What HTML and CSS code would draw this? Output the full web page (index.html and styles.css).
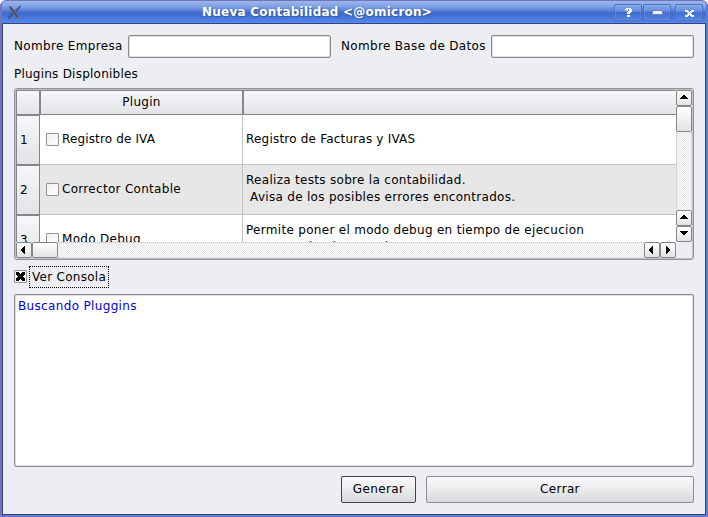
FILE: index.html
```html
<!DOCTYPE html>
<html lang="es">
<head>
<meta charset="utf-8">
<title>Nueva Contabilidad</title>
<link rel="stylesheet" href="styles.css">
</head>
<body>
<div class="window">
  <header class="titlebar">
    <svg class="logo" width="16" height="16" viewBox="0 0 16 16"><path d="M1.500 1.500h2.500L12.500 13H10z" fill="#3e424b" stroke="#77797e" stroke-width=".8"/><path d="M13.500 1 8.500 6.500M5.500 9 1.500 13.500" stroke="#454954" stroke-width="1.500"/></svg>
    <h1 class="title">Nueva Contabilidad &lt;@omicron&gt;</h1>
    <div class="controls">
      <span class="ctl"><svg width="26" height="16" viewBox="0 0 26 16"><path d="M10 5.500V4h1V3h5v1h1v3h-1v1h-1v1h-3V7h1V6h1V4h-1v1.500zM12 10h3v2h-3z" fill="#f4f6fc"/></svg></span>
      <span class="ctl"><svg width="26" height="16" viewBox="0 0 26 16"><path d="M8.500 5.500h10v4h-10z" fill="#eef0f4" stroke="#7280ae"/></svg></span>
      <span class="ctl last"><svg width="26" height="16" viewBox="0 0 26 16"><path d="M9 5h3v1h1v1h1V6h1V5h3v2h-2v1h-1v1h1v1h2v2h-3v-1h-1v-1h-1v1h-1v1H9v-2h2V9h1V8h-1V7H9z" fill="#f4f6fc"/></svg></span>
    </div>
  </header>
  <main class="content">
    <div class="form">
      <label class="name">Nombre Empresa</label><div class="field"></div>
      <label class="base">Nombre Base de Datos</label><div class="field"></div>
    </div>
    <div class="heading">Plugins Displonibles</div>
    <div class="table">
      <div class="view">
        <div class="row head"><div class="num"></div><div class="plugin"><span>Plugin</span></div><div class="desc"></div></div>
        <div class="row"><div class="num">1</div><div class="plugin"><i class="box"></i><span class="tight">Registro de IVA</span></div><div class="desc single"><p>Registro de Facturas y IVAS</p></div></div>
        <div class="row alt"><div class="num">2</div><div class="plugin"><i class="box"></i><span>Corrector Contable</span></div><div class="desc"><p>Realiza tests sobre la contabilidad.<br>&nbsp;Avisa de los posibles errores encontrados.</p></div></div>
        <div class="row"><div class="num">3</div><div class="plugin"><i class="box"></i><span>Modo Debug</span></div><div class="desc"><p>Permite poner el modo debug en tiempo de ejecucion<br>&nbsp;Se recomienda para depurar</p></div></div>
      </div>
      <div class="vbar">
        <span class="btn"><svg width="14" height="14"><path d="M6 4h2v1h1v1h1v1h1v1H3V7h1V6h1V5h1z"/></svg></span>
        <span class="vthumb"></span><span class="vtrack"></span>
        <span class="btn"><svg width="14" height="14"><path d="M6 4h2v1h1v1h1v1h1v1H3V7h1V6h1V5h1z"/></svg></span>
        <span class="btn"><svg width="14" height="14"><path d="M3 4h8v1h-1v1H9v1H8v1H6V7H5V6H4V5H3z"/></svg></span>
      </div>
      <div class="hbar">
        <span class="btn"><svg width="14" height="14"><path d="M8 3v8H7v-1H6V9H5V8H4V6h1V5h1V4h1V3z"/></svg></span>
        <span class="hthumb"></span><span class="htrack"></span>
        <span class="btn"><svg width="14" height="14"><path d="M8 3v8H7v-1H6V9H5V8H4V6h1V5h1V4h1V3z"/></svg></span>
        <span class="btn"><svg width="14" height="14"><path d="M5 3v8h1v-1h1V9h1V8h1V6H8V5H7V4H6V3z"/></svg></span>
      </div>
    </div>
    <div class="toggle">
      <i class="box checked"><svg width="11" height="11" viewBox="0 0 11 11"><path d="M1 1h3v1h1v1h1V2h1V1h3v3H9v1H8v1h1v1h1v3H7V9H6V8H5v1H4v1H1V7h1V6h1V5H2V4H1z"/></svg></i>
      <span class="focus">Ver Consola</span>
    </div>
    <div class="console">Buscando Pluggins</div>
    <div class="actions"><div class="action primary">Generar</div><div class="action wide">Cerrar</div></div>
  </main>
</div>
</body>
</html>
```
FILE: styles.css
```css
* { box-sizing: border-box; }
body {
  margin: 0;
  background: #fff;
  color: #000;
  font: 12px/16px "DejaVu Sans", sans-serif;
}
.window {
  width: 708px;
  height: 517px;
  padding: 0 1px 1px;
  border: 1px solid #7573b5;
  border-radius: 6px 6px 0 0;
  background: #5283e2;
  overflow: hidden;
}
.titlebar {
  display: flex;
  height: 22px;
  background: linear-gradient(#9ab7ee 0, #7fa2e6 25%, #5a82d9 42%, #3d68ca 55%, #4472d6 70%, #5489ed 100%);
}
.logo { margin: 4px 0 0 5px; }
.title {
  flex: 1;
  margin: 0;
  padding-left: 179px;
  color: #fff;
  font-size: 12px;
  font-weight: bold;
  line-height: 22px;
  letter-spacing: .23px;
  white-space: nowrap;
  text-shadow: 1px 1px 1px #3558a8;
}
.controls { display: flex; gap: 1px; padding: 3px 3px 0 0; }
.ctl {
  width: 28px;
  height: 17px;
  border: 1px solid #496fc0;
  border-radius: 2px;
  background: linear-gradient(#86a7ea, #668ee0 40%, #416dce 50%, #5383e3);
  box-shadow: inset 0 0 0 1px #ffffff18;
}
.ctl.last { margin-left: 3px; }
.ctl svg { display: block; }
.content {
  height: 492px;
  padding: 11px 11px 0;
  border: 1px solid #39407c;
  background: #edeef2;
}
.form { display: flex; height: 23px; line-height: 22px; white-space: nowrap; }
.name { width: 114px; }
.base { width: 150px; margin-left: 10px; }
.field {
  width: 203px;
  border: 1px solid #8a8b8a;
  border-radius: 2px;
  background: #fff;
  box-shadow: inset 0 0 0 1px #dededf;
}
.form { letter-spacing: .33px; }
.heading { height: 30px; padding-top: 8px; letter-spacing: .23px; }
.table {
  display: grid;
  grid-template-columns: 660px 16px;
  grid-template-rows: 152px 16px;
  width: 680px;
  height: 172px;
  padding: 1px;
  border: 1px solid #909294;
  border-radius: 3px;
  box-shadow: inset 0 0 0 1px #c0c1c3;
}
.view { overflow: hidden; border-top: 1px solid #858688; border-left: 1px solid #858688; background: #fff; }
.row {
  display: grid;
  grid-template-columns: 23px 203px 1fr;
  height: 50px;
  letter-spacing: .3px;
}
.row > div { display: flex; align-items: center; border-bottom: 1px solid #c3c3c3; }
.row .num {
  padding: 0 0 1px 3px;
  border-top: 1px solid #858688;
  border-right: 1px solid #858688;
  border-bottom: 1px solid #858688;
  background: linear-gradient(#f6f7fa, #e2e3e7);
}
.row .plugin { padding-left: 6px; border-right: 1px solid #c3c3c3; }
.plugin span { margin: -2px 0 0 3px; }
.row .tight { letter-spacing: .14px; }
.row.alt { background: #e7e7e7; }
.row.head {
  grid-template-columns: 24px 203px 1fr;
  height: 24px;
  background: linear-gradient(#f6f7fa, #e2e3e7);
}
.row.head > div { border-bottom: 1px solid #858688; }
.row.head .num { border-top: 0; border-right: 2px solid #858688; }
.row.head .plugin { justify-content: center; padding: 0 3px 0 0; border-right: 2px solid #858688; }
.desc { padding-left: 3px; line-height: 17px; white-space: nowrap; }
.desc p { margin: -2px 0 0; }
.single { letter-spacing: .2px; }
.single p { margin-top: 0; }
.box {
  width: 13px;
  height: 13px;
  flex: none;
  border: 1px solid #929292;
  border-radius: 1px;
  background: linear-gradient(135deg, #f0f0f0, #fff);
}
.btn, .vthumb, .hthumb {
  flex: none;
  width: 16px;
  height: 16px;
  border: 1px solid #858688;
  border-radius: 2px;
  background: linear-gradient(#fff, #e2e3e5);
}
.btn svg { display: block; }
.vbar, .hbar { display: flex; }
.vbar { flex-direction: column; }
.vthumb { height: 26px; }
.hthumb { width: 26px; }
.vtrack, .htrack {
  flex: 1;
  background: repeating-conic-gradient(#e7e8ea 0 25%, #fafafa 0 50%) 0 0 / 2px 2px;
}
.vtrack { border-left: 1px dotted #c2c2c2; border-right: 1px dotted #c2c2c2; }
.htrack { border-top: 1px dotted #c2c2c2; border-bottom: 1px dotted #c2c2c2; }
.toggle { display: flex; height: 34px; padding-top: 6px; letter-spacing: .28px; }
.checked { margin-top: 4px; }
.checked svg { display: block; }
.focus {
  width: 80px;
  height: 22px;
  margin-left: 2px;
  padding-left: 2px;
  border: 1px dotted #000;
  line-height: 20px;
  white-space: nowrap;
}
.console {
  height: 173px;
  padding: 3px;
  border: 1px solid #8a8b8d;
  border-radius: 2px;
  background: #fff;
  box-shadow: inset 0 0 0 1px #dededf;
  color: #0000e0;
  letter-spacing: .34px;
}
.actions { display: flex; justify-content: flex-end; gap: 10px; padding-top: 9px; letter-spacing: .35px; }
.action {
  width: 75px;
  height: 27px;
  border: 1px solid #8b8c8e;
  border-radius: 2px;
  background: linear-gradient(#f8f9fa, #e8e9ea 55%, #d7d8d9);
  line-height: 24px;
  text-align: center;
}
.primary { border-color: #424345; }
.wide { width: 268px; }
```
